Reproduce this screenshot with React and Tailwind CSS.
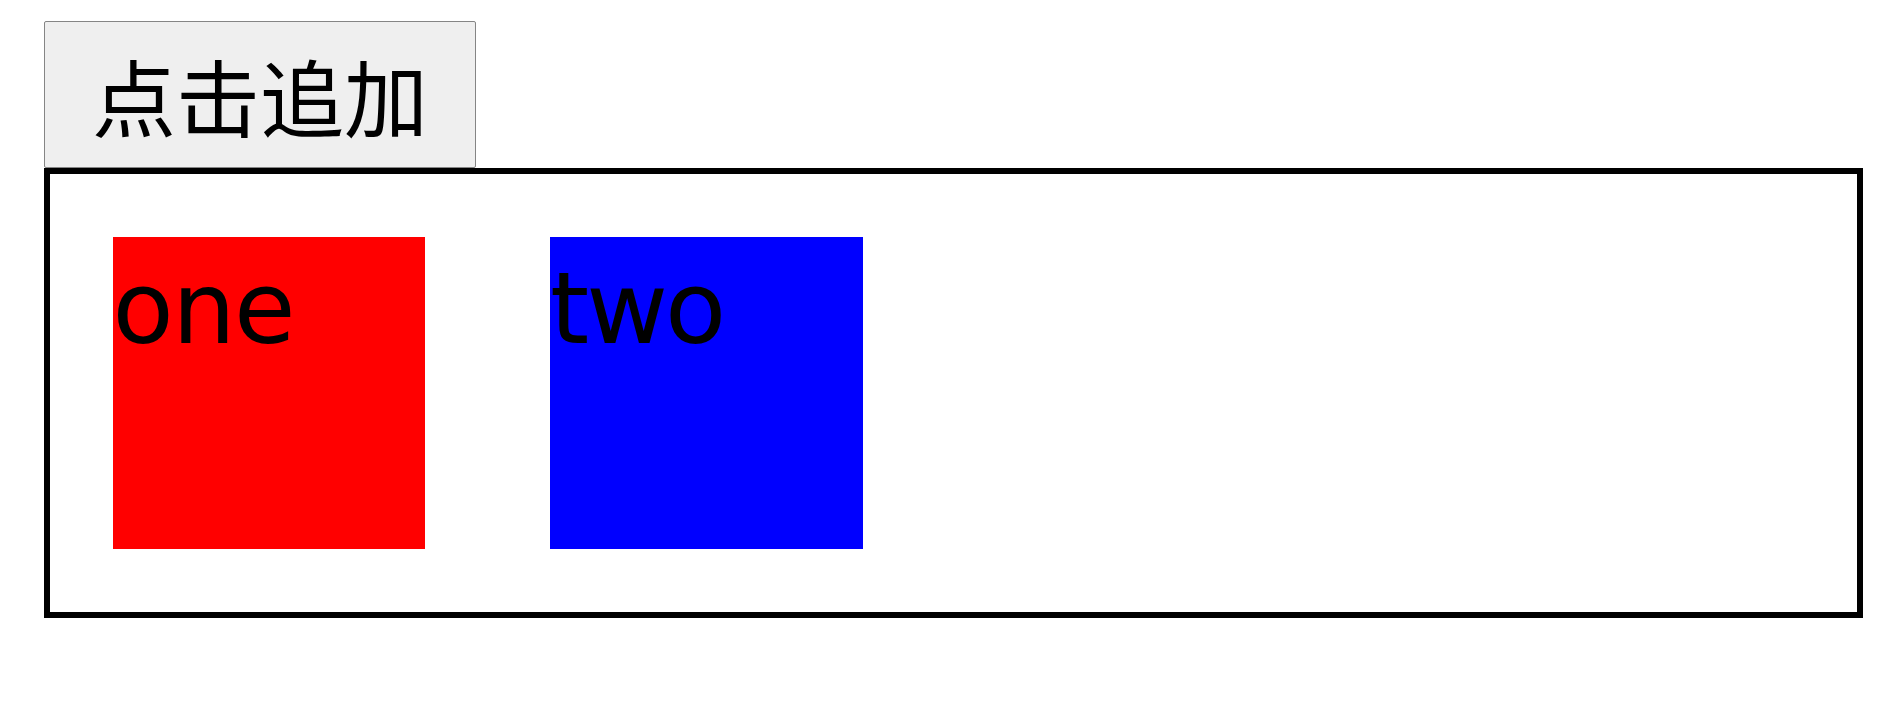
export default function App() {
  return (
    <div className="pt-[21px] pl-[44px] pr-[21px] bg-white min-h-[710px]">
      <button
        type="button"
        className="flex items-center justify-center w-[432px] h-[147px] bg-[#efefef] border border-[#858585] rounded-[2px] text-black text-[84px] leading-none p-0 font-normal font-['Noto_Sans_CJK_SC','Noto_Sans',sans-serif]"
      >
        点击追加
      </button>
      <div className="flex border-[6px] border-black font-['DejaVu_Sans',sans-serif] text-black text-[100px] leading-[144px] tracking-[-1.5px]">
        <div className="w-[312.5px] h-[312.5px] m-[62.5px] shrink-0 bg-[#ff0000]">one</div>
        <div className="w-[312.5px] h-[312.5px] m-[62.5px] shrink-0 bg-[#0000ff] tracking-[-3px]">two</div>
      </div>
    </div>
  );
}
